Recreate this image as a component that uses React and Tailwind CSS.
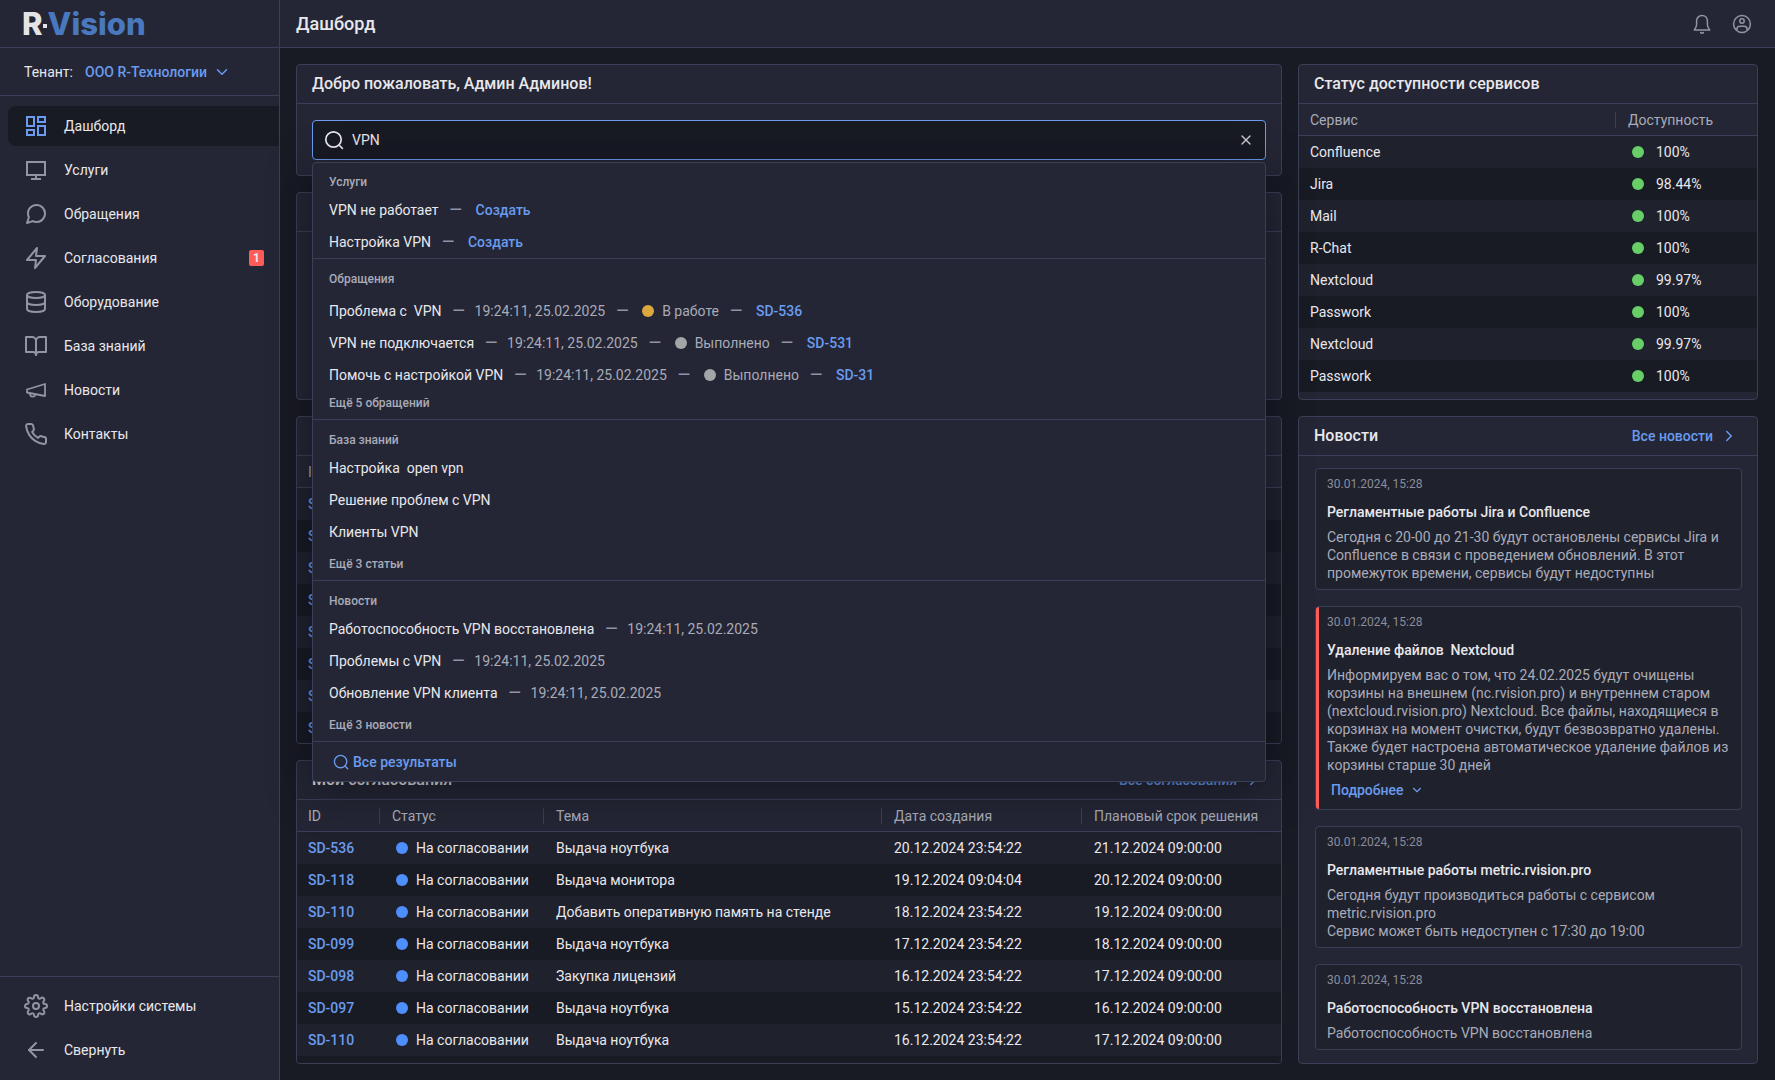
import React, { useState } from 'react';
import {
  FiArrowLeft,
  FiBookOpen,
  FiChevronDown,
  FiChevronRight,
  FiDatabase,
  FiMessageCircle,
  FiPhone,
  FiSettings,
  FiX,
  FiZap,
} from 'react-icons/fi';

function DashboardIcon() {
  return (
    <svg width="24" height="24" viewBox="0 0 24 24" fill="none" stroke="currentColor" strokeWidth="2">
      <rect x="3" y="3" width="7" height="9" />
      <rect x="14" y="3" width="7" height="5" />
      <rect x="14" y="12" width="7" height="9" />
      <rect x="3" y="16" width="7" height="5" />
    </svg>
  );
}

function MonitorIcon() {
  return (
    <svg width="24" height="24" viewBox="0 0 24 24" fill="none" stroke="currentColor" strokeWidth="2">
      <rect x="3" y="4" width="18" height="13" />
      <path d="M12 17v4M7 21h10" />
    </svg>
  );
}

function MegaphoneIcon() {
  return (
    <svg width="24" height="24" viewBox="0 0 24 24" fill="none" stroke="currentColor" strokeWidth="1.8" strokeLinejoin="round">
      <path d="M3 11.5 21 6v12L3 14.5z" />
      <path d="M6 15.3c0 2.2 1 3.4 2.6 3.4 1.5 0 2.5-.8 3-2.2" />
    </svg>
  );
}

function BellIcon() {
  return (
    <svg width="24" height="24" viewBox="0 0 24 24" fill="none" stroke="currentColor" strokeWidth="1.5" strokeLinecap="round" strokeLinejoin="round">
      <path d="M12 3.6c-3.2 0-5.4 2.3-5.4 5.4v3.8c0 1.7-.8 3.1-2.3 5.2h15.4c-1.5-2.1-2.3-3.5-2.3-5.2V9c0-3.1-2.2-5.4-5.4-5.4z" />
      <path d="M10.6 20.6c.8.7 2 .7 2.8 0" />
    </svg>
  );
}

function ProfileIcon() {
  return (
    <svg width="24" height="24" viewBox="0 0 24 24" fill="none" stroke="currentColor" strokeWidth="1.5">
      <circle cx="12" cy="12" r="8.4" />
      <circle cx="12" cy="9" r="2.2" />
      <path d="M6.8 18.2v-.7c0-1.9 1.300-3.2 3.200-3.2h4c1.900 0 3.200 1.300 3.200 3.200v.7" />
    </svg>
  );
}

function SearchIcon({ size }) {
  return (
    <svg width={size} height={size} viewBox="0 0 20 20" fill="none" stroke="currentColor" strokeWidth="1.7" strokeLinecap="round">
      <circle cx="9.5" cy="9.5" r="7.7" />
      <path d="m15 15 3.4 3.4" />
    </svg>
  );
}

const menu = [
  { label: 'Дашборд', icon: DashboardIcon, active: true },
  { label: 'Услуги', icon: MonitorIcon },
  { label: 'Обращения', icon: FiMessageCircle },
  { label: 'Согласования', icon: FiZap, badge: 1 },
  { label: 'Оборудование', icon: FiDatabase },
  { label: 'База знаний', icon: FiBookOpen },
  { label: 'Новости', icon: MegaphoneIcon },
  { label: 'Контакты', icon: FiPhone },
];

const services = [
  ['Confluence', '100%'],
  ['Jira', '98.44%'],
  ['Mail', '100%'],
  ['R-Chat', '100%'],
  ['Nextcloud', '99.97%'],
  ['Passwork', '100%'],
  ['Nextcloud', '99.97%'],
  ['Passwork', '100%'],
];

const approvals = [
  ['SD-536', 'Выдача ноутбука', '20.12.2024 23:54:22', '21.12.2024 09:00:00'],
  ['SD-118', 'Выдача монитора', '19.12.2024 09:04:04', '20.12.2024 09:00:00'],
  ['SD-110', 'Добавить оперативную память на стенде', '18.12.2024 23:54:22', '19.12.2024 09:00:00'],
  ['SD-099', 'Выдача ноутбука', '17.12.2024 23:54:22', '18.12.2024 09:00:00'],
  ['SD-098', 'Закупка лицензий', '16.12.2024 23:54:22', '17.12.2024 09:00:00'],
  ['SD-097', 'Выдача ноутбука', '15.12.2024 23:54:22', '16.12.2024 09:00:00'],
  ['SD-110', 'Выдача ноутбука', '16.12.2024 23:54:22', '17.12.2024 09:00:00'],
];

const tickets = ['SD-536', 'SD-531', 'SD-31', 'SD-118', 'SD-110', 'SD-099', 'SD-098', 'SD-097'];

const news = [
  {
    date: '30.01.2024, 15:28',
    title: 'Регламентные работы Jira и Confluence',
    text: 'Сегодня с 20-00 до 21-30 будут остановлены сервисы Jira и Confluence в связи с проведением обновлений. В этот промежуток времени, сервисы будут недоступны',
  },
  {
    date: '30.01.2024, 15:28',
    title: 'Удаление файлов  Nextcloud',
    text: 'Информируем вас о том, что 24.02.2025 будут очищены корзины на внешнем (nc.rvision.pro) и внутреннем старом (nextcloud.rvision.pro) Nextcloud. Все файлы, находящиеся в корзинах на момент очистки, будут безвозвратно удалены. Также будет настроена автоматическое удаление файлов из корзины старше 30 дней',
    important: true,
  },
  {
    date: '30.01.2024, 15:28',
    title: 'Регламентные работы metric.rvision.pro',
    text: 'Сегодня будут производиться работы с сервисом metric.rvision.pro\nСервис может быть недоступен с 17:30 до 19:00',
  },
  {
    date: '30.01.2024, 15:28',
    title: 'Работоспособность VPN восстановлена',
    text: 'Работоспособность VPN восстановлена',
  },
];

const foundTickets = [
  { title: 'Проблема с  VPN', status: 'В работе', dot: 'bg-[#dca73d]', id: 'SD-536' },
  { title: 'VPN не подключается', status: 'Выполнено', dot: 'bg-[#a1a6a9]', id: 'SD-531' },
  { title: 'Помочь с настройкой VPN', status: 'Выполнено', dot: 'bg-[#a1a6a9]', id: 'SD-31' },
];

const link = 'font-medium text-[#6a9bee]';

function Panel({ title, more, className = '', children }) {
  return (
    <section className={`flex flex-col overflow-hidden rounded border border-[#3a3f58] bg-[#242635] ${className}`}>
      <header className="flex h-[39px] shrink-0 items-center justify-between border-b border-[#3a3f58] pl-[15px] pr-[19px]">
        <h2 className="text-base font-medium">{title}</h2>
        {more && (
          <a href="#" className={`flex items-center gap-[7px] ${link}`}>
            {more} <FiChevronRight size={18} />
          </a>
        )}
      </header>
      {children}
    </section>
  );
}

function HeadCell({ children, first }) {
  return (
    <th className="h-8 border-b border-[#3a3f58] p-0 text-left font-normal text-[#a9abb8]">
      <div className={first ? 'pl-[11px]' : 'flex h-4 items-center border-l border-[#3a3f58] pl-3'}>{children}</div>
    </th>
  );
}

const rowClass = 'odd:bg-[#1f212d] even:bg-[#181a24]';
const tableClass = 'w-full table-fixed border-separate border-spacing-0';

function MenuItem({ label, icon: Icon, badge, active }) {
  return (
    <a
      href="#"
      className={`flex h-10 items-center gap-4 rounded-l-lg pl-4 pr-[15px] ${active ? 'bg-[#181a24]' : ''}`}
    >
      <span className={active ? 'text-[#6a9bee]' : 'text-[#9294a5]'}>
        <Icon size={24} />
      </span>
      <span className="flex-1">{label}</span>
      {badge && (
        <span className="flex h-4 w-[15px] items-center justify-center rounded-xs bg-[#ff5c57] text-xs font-bold">
          {badge}
        </span>
      )}
    </a>
  );
}

function Sidebar() {
  return (
    <aside className="flex w-[280px] shrink-0 flex-col border-r border-[#3a3f58] bg-[#242635]">
      <div className="flex h-12 items-center border-b border-[#3a3f58] pl-[22px] font-['Inter',sans-serif] text-[31px] font-extrabold leading-none">
        <span className="text-[#e4e4e6]">R</span>
        <span className="mt-1 size-1 bg-[#e4e4e6]" />
        <span className="ml-px text-[#4a78be]">Vision</span>
      </div>
      <div className="flex h-12 items-center border-b border-[#3a3f58] pl-6">
        <label htmlFor="tenant">Тенант:</label>
        <select id="tenant" className={`ml-3 mr-1.5 field-sizing-content appearance-none bg-transparent ${link}`}>
          <option>ООО R-Технологии</option>
        </select>
        <FiChevronDown size={18} className="text-[#6a9bee]" />
      </div>
      <nav className="flex flex-1 flex-col gap-1 pl-2 pt-2.5">
        {menu.map(item => <MenuItem key={item.label} {...item} />)}
      </nav>
      <div className="flex flex-col gap-1 border-t border-[#3a3f58] pt-[9px] pb-2.5 pl-2">
        <MenuItem label="Настройки системы" icon={FiSettings} />
        <MenuItem label="Свернуть" icon={FiArrowLeft} />
      </div>
    </aside>
  );
}

function Dash() {
  return <span className="w-[15px] text-base font-medium text-[#9294a5]">—</span>;
}

// the timestamp sits closer to its dash than links and statuses do
function FoundDate() {
  return <time className="-ml-1 text-[#a9abb8]">19:24:11, 25.02.2025</time>;
}

function ResultRow({ title, children }) {
  return (
    <li className="flex h-8 items-center gap-[11px]">
      <span className="whitespace-pre">{title}</span>
      {children}
    </li>
  );
}

function ResultGroup({ title, more, children, className = 'pt-3' }) {
  return (
    <div className={`border-b border-[#3a3f58] px-4 ${className}`}>
      <h3 className="mb-1 text-xs leading-4 font-medium text-[#a9abb8]">{title}</h3>
      <ul>{children}</ul>
      {more}
    </div>
  );
}

function SearchResults() {
  const moreClass = 'flex items-center text-xs font-medium text-[#a9abb8]';

  return (
    <div className="absolute inset-x-0 top-full z-10 mt-0.5 rounded border border-[#3a3f58] bg-[#242635] shadow-[0_8px_40px_rgba(8,9,14,0.5)]">
      <ResultGroup title="Услуги" className="pt-[11px]">
        {['VPN не работает', 'Настройка VPN'].map(title => (
          <ResultRow key={title} title={title}>
            <Dash />
            <a href="#" className={link}>Создать</a>
          </ResultRow>
        ))}
      </ResultGroup>

      <ResultGroup title="Обращения" className="pt-3 pb-1" more={<a href="#" className={`h-6 ${moreClass}`}>Ещё 5 обращений</a>}>
        <li className="h-1" />
        {foundTickets.map(t => (
          <ResultRow key={t.id} title={t.title}>
            <Dash />
            <FoundDate />
            <Dash />
            <span className="flex items-center gap-2 text-[#a9abb8]">
              <span className={`size-3 rounded-full ${t.dot}`} />
              {t.status}
            </span>
            <Dash />
            <a href="#" className={link}>{t.id}</a>
          </ResultRow>
        ))}
      </ResultGroup>

      <ResultGroup title="База знаний" more={<a href="#" className={`h-8 ${moreClass}`}>Ещё 3 статьи</a>}>
        <ResultRow title="Настройка  open vpn" />
        <ResultRow title="Решение проблем с VPN" />
        <ResultRow title="Клиенты VPN" />
      </ResultGroup>

      <ResultGroup title="Новости" more={<a href="#" className={`h-8 ${moreClass}`}>Ещё 3 новости</a>}>
        {['Работоспособность VPN восстановлена', 'Проблемы с VPN', 'Обновление VPN клиента'].map(title => (
          <ResultRow key={title} title={title}>
            <Dash />
            <FoundDate />
          </ResultRow>
        ))}
      </ResultGroup>

      <a href="#" className={`flex h-[39px] items-center gap-1 pl-5 ${link}`}>
        <SearchIcon size={16} />
        Все результаты
      </a>
    </div>
  );
}

function Search() {
  const [query, setQuery] = useState('VPN');

  return (
    <div className="relative mx-[15px] mb-[15px] mt-4">
      <div className="flex h-10 items-center rounded border border-[#6a9bee] bg-[#181a24] px-[11px]">
        <SearchIcon size={20} />
        <input
          aria-label="Поиск"
          value={query}
          onChange={e => setQuery(e.target.value)}
          className="ml-2 flex-1 bg-transparent outline-none"
        />
        <button aria-label="Очистить" onClick={() => setQuery('')} className="text-[#c9cad3]">
          <FiX size={16} />
        </button>
      </div>
      {query && <SearchResults />}
    </div>
  );
}

function Tickets() {
  return (
    <Panel className="h-[328px]">
      <table className={tableClass}>
        <thead>
          <tr><HeadCell first>ID</HeadCell></tr>
        </thead>
        <tbody>
          {tickets.map(id => (
            <tr key={id} className={rowClass}>
              <td className="h-8 p-0 pl-[11px]"><a href="#" className={link}>{id}</a></td>
            </tr>
          ))}
        </tbody>
      </table>
    </Panel>
  );
}

function Approvals() {
  return (
    <Panel title="Мои согласования" more="Все согласования" className="flex-1">
      <div className="flex-1 bg-[#181a24]">
        <table className={tableClass}>
          <colgroup>
            <col className="w-[82px]" />
            <col className="w-[164px]" />
            <col />
            <col className="w-[200px]" />
            <col className="w-[200px]" />
          </colgroup>
          <thead className="bg-[#242635]">
            <tr>
              <HeadCell first>ID</HeadCell>
              <HeadCell>Статус</HeadCell>
              <HeadCell>Тема</HeadCell>
              <HeadCell>Дата создания</HeadCell>
              <HeadCell>Плановый срок решения</HeadCell>
            </tr>
          </thead>
          <tbody>
            {approvals.map(([id, subject, created, due], i) => (
              <tr key={i} className={rowClass}>
                <td className="h-8 p-0 pl-[11px]"><a href="#" className={link}>{id}</a></td>
                <td className="p-0 pl-[17px]">
                  <span className="flex items-center gap-2">
                    <span className="size-3 rounded-full bg-[#4d8fff]" />
                    На согласовании
                  </span>
                </td>
                <td className="p-0 pl-[13px]">{subject}</td>
                <td className="p-0 pl-[13px]">{created}</td>
                <td className="p-0 pl-[13px]">{due}</td>
              </tr>
            ))}
          </tbody>
        </table>
      </div>
    </Panel>
  );
}

function ServiceStatus() {
  return (
    <Panel title="Статус доступности сервисов" className="pb-[7px]">
      <table className={tableClass}>
        <colgroup>
          <col />
          <col className="w-[142px]" />
        </colgroup>
        <thead>
          <tr>
            <HeadCell first>Сервис</HeadCell>
            <HeadCell>Доступность</HeadCell>
          </tr>
        </thead>
        <tbody>
          {services.map(([name, value], i) => (
            <tr key={i} className={rowClass}>
              <td className="h-8 p-0 pl-[11px]">{name}</td>
              <td className="p-0 pl-[17px]">
                <span className="flex items-center gap-3">
                  <span className="size-3 rounded-full bg-[#66cf66]" />
                  {value}
                </span>
              </td>
            </tr>
          ))}
        </tbody>
      </table>
    </Panel>
  );
}

function NewsCard({ item }) {
  return (
    <article className="relative overflow-hidden rounded border border-[#3a3f58] bg-[#1f212d] px-[11px] py-[7px]">
      {/* red stripe marks important news */}
      {item.important && <span className="absolute inset-y-0 left-0 w-[3px] bg-[#ff5c57]" />}
      <time className="block text-xs leading-4 text-[#8b8d9a]">{item.date}</time>
      <h3 className="mt-2.5 font-medium whitespace-pre-wrap">{item.title}</h3>
      <p className="mt-1.5 leading-[18px] whitespace-pre-line text-[#a9abb8]">{item.text}</p>
      {item.important && (
        <button className={`mt-1 ml-1 flex h-6 items-center gap-1.5 ${link}`}>
          Подробнее <FiChevronDown size={14} />
        </button>
      )}
    </article>
  );
}

export default function App() {
  return (
    <div className="flex min-h-screen bg-[#181a24] font-['Roboto',sans-serif] text-sm text-[#e8e8ec]">
      <Sidebar />
      <div className="flex min-w-0 flex-1 flex-col">
        <header className="flex h-12 shrink-0 items-center justify-between border-b border-[#3a3f58] bg-[#242635] pl-4 pr-[21px]">
          <h1 className="text-lg font-medium">Дашборд</h1>
          <div className="flex gap-4 text-[#9294a5]">
            <button aria-label="Уведомления"><BellIcon /></button>
            <button aria-label="Профиль"><ProfileIcon /></button>
          </div>
        </header>

        <main className="flex flex-1 gap-4 py-4 pl-4 pr-[17px]">
          <div className="flex min-w-0 flex-1 flex-col gap-4">
            <section className="rounded border border-[#3a3f58] bg-[#242635]">
              <h2 className="flex h-[39px] items-center border-b border-[#3a3f58] px-[15px] text-base font-medium">
                Добро пожаловать, Админ Админов!
              </h2>
              <Search />
            </section>
            <Panel className="min-h-[208px]" />
            <Tickets />
            <Approvals />
          </div>

          <div className="flex w-[460px] shrink-0 flex-col gap-4">
            <ServiceStatus />
            <Panel title="Новости" more="Все новости" className="flex-1">
              <div className="flex flex-col gap-4 pt-3 pr-[15px] pb-3 pl-4">
                {news.map((item, i) => <NewsCard key={i} item={item} />)}
              </div>
            </Panel>
          </div>
        </main>
      </div>
    </div>
  );
}
